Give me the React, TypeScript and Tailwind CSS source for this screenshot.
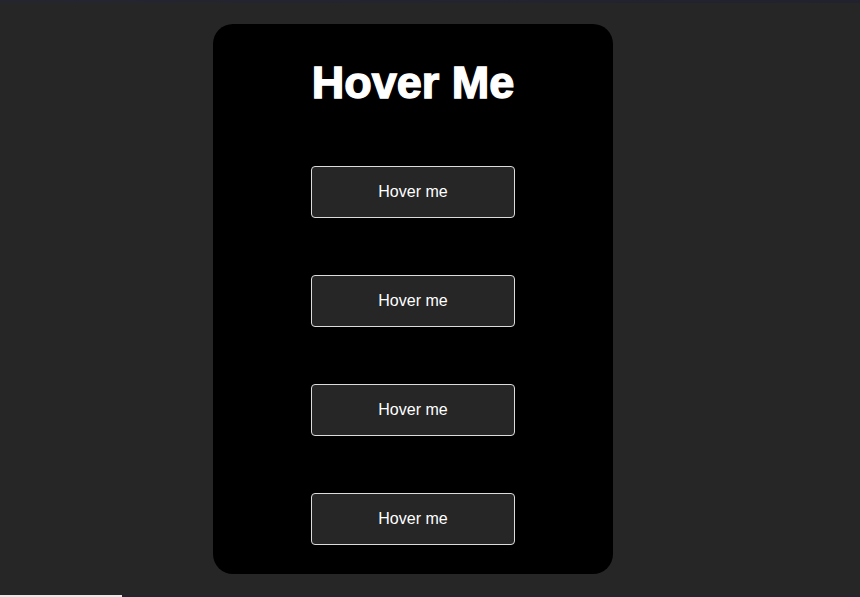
export default function App() {
  const buttons = ["Hover me", "Hover me", "Hover me", "Hover me"];

  return (
    <div className="flex h-[597px] w-[860px] flex-col overflow-hidden bg-[#262626] font-['Liberation_Sans',Arial,sans-serif]">
      <div className="h-[3px] w-full bg-gradient-to-r from-[#252530] to-[#22222f]" />

      <div className="flex flex-1 pl-[213px] pt-[21px]">
        <div className="flex h-[550px] w-[400px] flex-col items-center rounded-[20px] bg-black pt-[36px]">
          <h1 className="text-[45px] font-bold leading-none text-white [-webkit-text-stroke:1.4px_white]">
            Hover Me
          </h1>

          <div className="mt-[61px] flex flex-col gap-[57px]">
            {buttons.map((label, i) => (
              <button
                key={i}
                className="h-[52px] w-[204px] rounded-[4px] border border-[#dcdcdc] bg-[#262626] text-[16px] text-white hover:bg-[#333]"
              >
                {label}
              </button>
            ))}
          </div>
        </div>
      </div>

      <div className="flex h-[2px] w-full bg-[#1f2630]">
        <div className="h-full w-[122px] bg-[#e8e8e8]" />
      </div>
    </div>
  );
}
